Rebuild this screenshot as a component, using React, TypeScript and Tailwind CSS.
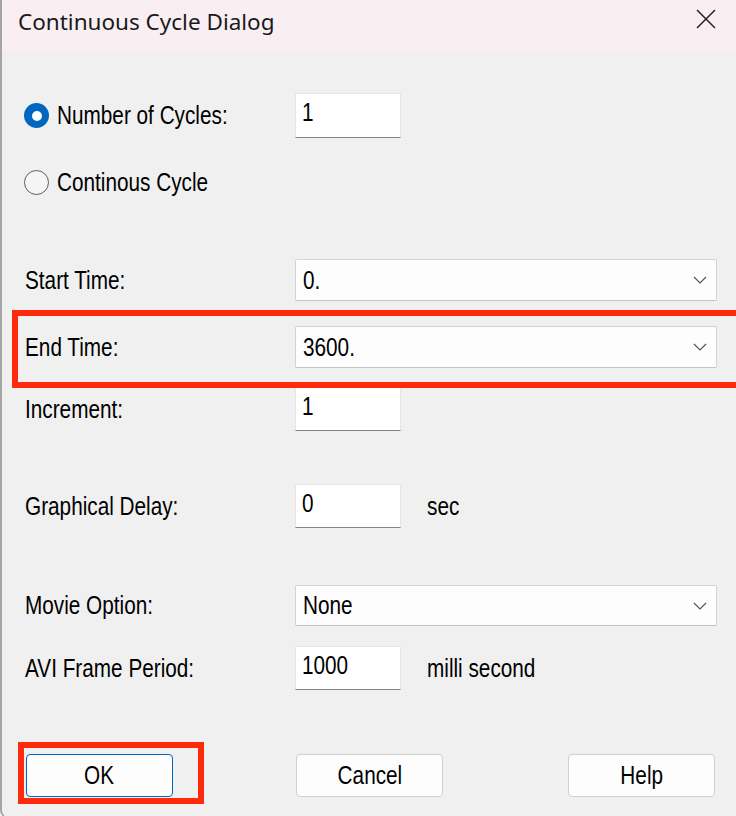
import React from "react";

// Narrow dialog lettering: Liberation Sans squeezed horizontally.
function T({ children, center }: { children: React.ReactNode; center?: boolean }) {
  return (
    <span
      className={
        center
          ? "inline-block whitespace-nowrap origin-center scale-x-[0.83]"
          : "inline-block whitespace-nowrap origin-left scale-x-[0.83]"
      }
    >
      {children}
    </span>
  );
}

function Chevron() {
  return (
    <svg width="14" height="8" viewBox="0 0 14 8" fill="none" className="shrink-0">
      <polyline points="1,1 7,7 13,1" stroke="#555555" strokeWidth="1.2" />
    </svg>
  );
}

function Combo({ value }: { value: string }) {
  return (
    <div className="w-[422px] h-full bg-[#fdfdfd] border border-[#d3d3d3] border-b-[#c4c4c4] rounded-[2px] flex items-center justify-between pl-[7px] pr-[9px]">
      <T>{value}</T>
      <Chevron />
    </div>
  );
}

function TextBox({ value }: { value: string }) {
  return (
    <div className="w-[106px] h-full bg-white border border-[#e6e6e6] border-b-[#858585] pl-[6px] pt-[6px]">
      <T>{value}</T>
    </div>
  );
}

function Button({ label, primary }: { label: string; primary?: boolean }) {
  return (
    <div
      className={
        primary
          ? "w-[147px] h-[43px] bg-[#fdfdfd] border border-[#0067c0] rounded-[4px] flex items-center justify-center"
          : "w-[147px] h-[43px] bg-[#fdfdfd] border border-[#d0d0d0] rounded-[4px] flex items-center justify-center"
      }
    >
      <T center>{label}</T>
    </div>
  );
}

export default function App() {
  return (
    <div className="w-[736px] h-[816px] overflow-hidden bg-[#f0f0f0] font-['Liberation_Sans',Arial,sans-serif] text-[25px] leading-none text-black">
      <div className="h-[818px] border-l-2 border-b border-[#a5a5a5] rounded-bl-[8px] flex flex-col">
        {/* title bar */}
        <div className="h-[51px] bg-[#f9eff3] flex items-start justify-between pl-[16px] pr-[20px] shrink-0">
          <span className="mt-[11px] font-['Noto_Sans',sans-serif] text-[22.5px] leading-none text-[#1a1a1a]">
            Continuous Cycle Dialog
          </span>
          <svg width="20" height="20" viewBox="0 0 20 20" className="mt-[9px]">
            <line x1="1" y1="1" x2="19" y2="19" stroke="#1c1c1c" strokeWidth="1.4" />
            <line x1="19" y1="1" x2="1" y2="19" stroke="#1c1c1c" strokeWidth="1.4" />
          </svg>
        </div>

        <div className="pl-[22px] flex flex-col">
          {/* cycle mode */}
          <div className="mt-[42px] h-[45px] flex items-center">
            <div className="w-[271px] flex items-center">
              <div className="w-[25px] h-[25px] rounded-full bg-[#0067c0] flex items-center justify-center">
                <div className="w-[10px] h-[10px] rounded-full bg-white" />
              </div>
              <span className="ml-[8px]">
                <T>Number of Cycles:</T>
              </span>
            </div>
            <TextBox value="1" />
          </div>

          <div className="mt-[31px] h-[26px] flex items-center">
            <div className="w-[25px] h-[25px] rounded-full border-[1.5px] border-[#5e5e5e] bg-[#f5f5f5]" />
            <span className="ml-[8px]">
              <T>Continous Cycle</T>
            </span>
          </div>

          {/* time range */}
          <div className="mt-[64px] h-[42px] flex items-center">
            <span className="w-[271px] pl-[1px]">
              <T>Start Time:</T>
            </span>
            <Combo value="0." />
          </div>

          <div className="mt-[25px] h-[42px] flex items-center relative">
            <span className="w-[271px] pl-[1px]">
              <T>End Time:</T>
            </span>
            <Combo value="3600." />
            <div className="absolute left-[-12px] top-[-16px] right-[-40px] bottom-[-20px] border-[6px] border-[#ff2a0c] z-10 pointer-events-none" />
          </div>

          <div className="mt-[19px] h-[44px] flex items-center">
            <span className="w-[271px] pl-[1px]">
              <T>Increment:</T>
            </span>
            <TextBox value="1" />
          </div>

          <div className="mt-[53px] h-[44px] flex items-center">
            <span className="w-[271px] pl-[1px]">
              <T>Graphical Delay:</T>
            </span>
            <TextBox value="0" />
            <span className="ml-[26px]">
              <T>sec</T>
            </span>
          </div>

          {/* movie output */}
          <div className="mt-[57px] h-[41px] flex items-center">
            <span className="w-[271px] pl-[1px]">
              <T>Movie Option:</T>
            </span>
            <Combo value="None" />
          </div>

          <div className="mt-[20px] h-[44px] flex items-center">
            <span className="w-[271px] pl-[1px]">
              <T>AVI Frame Period:</T>
            </span>
            <TextBox value="1000" />
            <span className="ml-[26px]">
              <T>milli second</T>
            </span>
          </div>

          {/* buttons */}
          <div className="mt-[64px] h-[43px] flex items-center">
            <div className="ml-[2px] relative">
              <Button label="OK" primary />
              <div className="absolute left-[-8px] top-[-12px] w-[186px] h-[62px] border-[6px] border-[#ff2a0c] pointer-events-none" />
            </div>
            <div className="ml-[123px]">
              <Button label="Cancel" />
            </div>
            <div className="ml-[125px]">
              <Button label="Help" />
            </div>
          </div>
        </div>
      </div>
    </div>
  );
}
